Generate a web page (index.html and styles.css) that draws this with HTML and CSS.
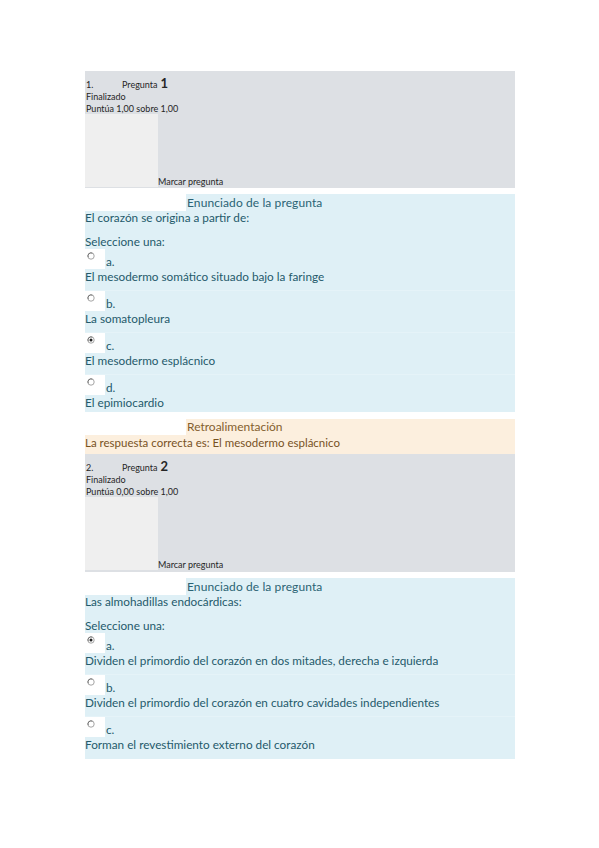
FILE: index.html
```html
<!DOCTYPE html>
<html lang="es">
<head>
<meta charset="utf-8">
<title>Pregunta</title>
<link rel="stylesheet" href="styles.css">
</head>
<body>
<div class="page">

  <div class="info">
    <div class="info-title"><span class="num">1.</span><span class="qword">Pregunta</span><span class="qno">1</span></div>
    <div class="info-line">Finalizado</div>
    <div class="info-line">Puntúa 1,00 sobre 1,00</div>
    <div class="flag-row"><div class="flagbox"></div><span class="flag-text">Marcar pregunta</span></div>
  </div>

  <div class="q">
    <div class="q-head">Enunciado de la pregunta</div>
    <div class="q-body">
      <div class="qtext">El corazón se origina a partir de:</div>
      <div class="prompt">Seleccione una:</div>
      <div class="opt">
        <div class="opt-head"><span class="radio-box"><svg class="radio" width="8" height="8" viewBox="0 0 8 8"><circle cx="4" cy="4" r="3.2" fill="#fff" stroke="#9a9a9a" stroke-width="0.9"/><path d="M1.2 5.2A3.2 3.2 0 0 1 5.4 1.1" fill="none" stroke="#6d6d6d" stroke-width="0.9"/></svg></span><span class="letter">a.</span></div>
        <div class="ans">El mesodermo somático situado bajo la faringe</div>
      </div>
      <div class="opt">
        <div class="opt-head"><span class="radio-box"><svg class="radio" width="8" height="8" viewBox="0 0 8 8"><circle cx="4" cy="4" r="3.2" fill="#fff" stroke="#9a9a9a" stroke-width="0.9"/><path d="M1.2 5.2A3.2 3.2 0 0 1 5.4 1.1" fill="none" stroke="#6d6d6d" stroke-width="0.9"/></svg></span><span class="letter">b.</span></div>
        <div class="ans">La somatopleura</div>
      </div>
      <div class="opt">
        <div class="opt-head"><span class="radio-box"><svg class="radio" width="8" height="8" viewBox="0 0 8 8"><circle cx="4" cy="4" r="3.2" fill="#fff" stroke="#9a9a9a" stroke-width="0.9"/><path d="M1.2 5.2A3.2 3.2 0 0 1 5.4 1.1" fill="none" stroke="#6d6d6d" stroke-width="0.9"/><circle cx="4" cy="4" r="1.5" fill="#222"/></svg></span><span class="letter">c.</span></div>
        <div class="ans">El mesodermo esplácnico</div>
      </div>
      <div class="opt">
        <div class="opt-head"><span class="radio-box"><svg class="radio" width="8" height="8" viewBox="0 0 8 8"><circle cx="4" cy="4" r="3.2" fill="#fff" stroke="#9a9a9a" stroke-width="0.9"/><path d="M1.2 5.2A3.2 3.2 0 0 1 5.4 1.1" fill="none" stroke="#6d6d6d" stroke-width="0.9"/></svg></span><span class="letter">d.</span></div>
        <div class="ans">El epimiocardio</div>
      </div>
    </div>
  </div>

  <div class="fb">
    <div class="fb-head">Retroalimentación</div>
    <div class="fb-body">La respuesta correcta es: El mesodermo esplácnico</div>
  </div>

  <div class="info info-joined">
    <div class="info-title"><span class="num">2.</span><span class="qword">Pregunta</span><span class="qno">2</span></div>
    <div class="info-line">Finalizado</div>
    <div class="info-line">Puntúa 0,00 sobre 1,00</div>
    <div class="flag-row"><div class="flagbox"></div><span class="flag-text">Marcar pregunta</span></div>
  </div>

  <div class="q">
    <div class="q-head">Enunciado de la pregunta</div>
    <div class="q-body q-body-last">
      <div class="qtext">Las almohadillas endocárdicas:</div>
      <div class="prompt">Seleccione una:</div>
      <div class="opt">
        <div class="opt-head"><span class="radio-box"><svg class="radio" width="8" height="8" viewBox="0 0 8 8"><circle cx="4" cy="4" r="3.2" fill="#fff" stroke="#9a9a9a" stroke-width="0.9"/><path d="M1.2 5.2A3.2 3.2 0 0 1 5.4 1.1" fill="none" stroke="#6d6d6d" stroke-width="0.9"/><circle cx="4" cy="4" r="1.5" fill="#222"/></svg></span><span class="letter">a.</span></div>
        <div class="ans">Dividen el primordio del corazón en dos mitades, derecha e izquierda</div>
      </div>
      <div class="opt">
        <div class="opt-head"><span class="radio-box"><svg class="radio" width="8" height="8" viewBox="0 0 8 8"><circle cx="4" cy="4" r="3.2" fill="#fff" stroke="#9a9a9a" stroke-width="0.9"/><path d="M1.2 5.2A3.2 3.2 0 0 1 5.4 1.1" fill="none" stroke="#6d6d6d" stroke-width="0.9"/></svg></span><span class="letter">b.</span></div>
        <div class="ans">Dividen el primordio del corazón en cuatro cavidades independientes</div>
      </div>
      <div class="opt">
        <div class="opt-head"><span class="radio-box"><svg class="radio" width="8" height="8" viewBox="0 0 8 8"><circle cx="4" cy="4" r="3.2" fill="#fff" stroke="#9a9a9a" stroke-width="0.9"/><path d="M1.2 5.2A3.2 3.2 0 0 1 5.4 1.1" fill="none" stroke="#6d6d6d" stroke-width="0.9"/></svg></span><span class="letter">c.</span></div>
        <div class="ans">Forman el revestimiento externo del corazón</div>
      </div>
    </div>
  </div>

</div>
</body>
</html>
```

FILE: styles.css
```css
html, body {
  margin: 0;
  padding: 0;
  background: #ffffff;
}

body {
  font-family: Lato, "Open Sans", "Liberation Sans", sans-serif;
}

.page {
  padding: 71px 84px 0 85px;
}

/* question info block */
.info {
  background: #dde0e4;
  height: 117px;
  box-sizing: border-box;
  padding-top: 4px;
  display: flex;
  flex-direction: column;
  color: #262626;
  font-size: 9px;
}

.info-joined {
  height: 118px;
}

.info-title {
  display: flex;
  align-items: baseline;
  height: 16px;
  line-height: 16px;
  padding-left: 1px;
}

.num {
  width: 36px;
}

.qno {
  font-size: 13px;
  font-weight: 700;
  margin-left: 3px;
}

.info-line {
  height: 11.5px;
  line-height: 12px;
  padding-left: 1px;
}

.flag-row {
  display: flex;
  align-items: flex-end;
  height: 73px;
}

.flagbox {
  width: 73px;
  height: 73px;
  background-color: #efefef;
  background-image: radial-gradient(circle, #e8e8e8 0.5px, transparent 0.7px);
  background-size: 4px 4px;
}

.flag-text {
  line-height: 10px;
  color: #262626;
}

/* question text block */
.q {
  margin-top: 6px;
  color: #245a6b;
  font-size: 11.75px;
}

.q-head {
  margin-left: 101px;
  background: #dff0f6;
  height: 17px;
  line-height: 17px;
  font-size: 12px;
  padding-left: 1px;
  color: #2a6374;
  letter-spacing: 0.1px;
}

.q-body {
  background: #dff0f6;
  padding-bottom: 2px;
}

.q-body-last {
  padding-bottom: 7px;
}

.qtext {
  line-height: 14px;
  padding-bottom: 9px;
}

.prompt {
  line-height: 15px;
}

.opt + .opt {
  margin-top: 6px;
  border-top: 1px solid #e5f3f8;
}

.opt-head {
  display: flex;
  align-items: flex-end;
  height: 20px;
}

.radio-box {
  display: block;
  width: 20px;
  height: 20px;
  box-sizing: border-box;
  background: #ffffff;
  padding: 3px 0 0 2px;
}

.radio {
  display: block;
}

.letter {
  margin-left: 1px;
  line-height: 15px;
}

.ans {
  line-height: 15px;
}

/* feedback */
.fb {
  margin-top: 7px;
  color: #78521f;
  font-size: 11.5px;
}

.fb-head {
  margin-left: 101px;
  background: #fcefde;
  height: 16px;
  line-height: 16px;
  font-size: 12px;
  padding-left: 1px;
  color: #84602e;
}

.fb-body {
  background: #fcefde;
  line-height: 16px;
  padding-bottom: 3px;
}
```
